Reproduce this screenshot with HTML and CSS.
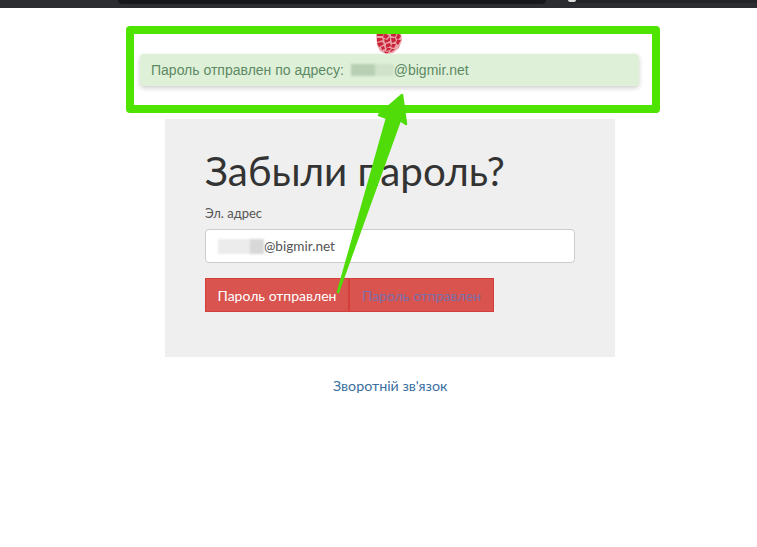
FILE: index.html
```html
<!DOCTYPE html>
<html lang="ru">
<head>
<meta charset="utf-8">
<title>Забыли пароль?</title>
<link rel="stylesheet" href="styles.css">
</head>
<body>
<header class="topbar"><div class="tab"></div><div class="address"><span class="dot"></span></div></header>
<main class="page">
  <div class="logo">
    <svg width="26" height="21" viewBox="0 0 26 21"><path d="M0 0h25l1 7-3 8-6 5-7 1-6-3-3-6z" fill="#e9a0a6"/><g fill="#c9243a"><path d="M1 0l7 0-1 3-6 0zM9 0l4 3-3 3-3-2zM15 0l6 0-2 4-4-1zM22 0l3 3-3 4-2-2zM1 5l5 0 1 2-6 2zM8 6l3 1 3-3 0 4-5 2zM15 5l4 0 1 3-4 2zM21 7l4 0-3 5-2-2zM1 10l5-1 2 2-5 3zM10 11l4-1 1 3-5 2zM16 11l4 0-2 4-3-1zM5 14l3-1 1 3-3 1zM11 15l4 0-1 2-4 1zM16 16l3 0-4 3-1-1zM8 18l3 1 2-1-1 2-3 0z"/></g></svg>
  </div>
  <div class="alert">Пароль отправлен по адресу:&nbsp;<span class="blur blur-alert"></span>@bigmir.net</div>
  <section class="panel">
    <h1 class="title">Забыли пароль?</h1>
    <label class="label">Эл. адрес</label>
    <div class="input"><span class="blur blur-input"></span>@bigmir.net</div>
    <div class="buttons">
      <button class="btn">Пароль отправлен</button><button class="btn btn-ghost">Пароль отправлен</button>
    </div>
  </section>
  <a class="feedback">Зворотній зв'язок</a>
</main>
<div class="highlight"></div>
<svg class="arrow" width="757" height="547" viewBox="0 0 757 547"><path d="M402 95L406 124L400 120L338 292L387 118L379 115Z" fill="#4fdc08" stroke="#4fdc08" stroke-width="2.5" stroke-linejoin="round"/></svg>
</body>
</html>
```
FILE: styles.css
```css
html, body { margin: 0; padding: 0; height: 547px; overflow: hidden; background: #fff; }
body { font-family: "Liberation Sans", Arial, sans-serif; color: #333; position: relative; }

.topbar { height: 8px; background: #2b2d30; display: flex; align-items: flex-start; }
.tab { width: 429px; height: 4px; margin-left: 118px; background: #17181a; border-radius: 0 0 10px 10px; }
.address { width: 190px; height: 3px; margin-left: 22px; background: #232427; display: flex; }
.dot { width: 8px; height: 2px; background: #ddd; border-radius: 0 0 4px 4px; }

.page { display: flex; flex-direction: column; align-items: flex-start; }
.logo { margin: 25px 0 0 376px; height: 21px; line-height: 0; filter: blur(.4px); }
.alert {
  box-sizing: border-box; width: 499px; height: 32px; margin-left: 140px;
  padding: 0 11px; display: flex; align-items: center; white-space: pre;
  background: #dff0d8; border-radius: 4px; box-shadow: 0 2px 5px rgba(0,0,0,.2);
  color: #5c8a64; font-size: 14px;
}
.blur { display: inline-block; filter: blur(1px); }
.blur-alert { width: 43px; height: 12px; margin-left: 3px; background: linear-gradient(90deg,#b8cfb4 0 55%,#d0e2ca 55% 100%); }
.blur-input { width: 46px; height: 15px; margin-left: 12px; background: linear-gradient(90deg,#ececec 0 70%,#d8d8d8 70% 100%); }

.panel { box-sizing: border-box; width: 450px; height: 238px; margin: 33px 0 0 165px; padding: 30px 40px 0; background: #efefef; }
.title { margin: 0; font-family: Lato, "Open Sans", sans-serif; font-weight: 400; font-size: 40.3px; line-height: 44px; color: #333; }
.label { display: block; margin-top: 12px; font-family: Lato, "Open Sans", sans-serif; font-size: 13px; line-height: 16px; color: #555; }
.input {
  box-sizing: border-box; width: 370px; height: 34px; margin-top: 8px;
  display: flex; align-items: center; background: #fff;
  border: 1px solid #ccc; border-radius: 4px;
  font-family: Lato, "Open Sans", sans-serif; font-size: 13.6px; color: #555;
}
.buttons { display: flex; margin-top: 15px; }
.btn {
  box-sizing: border-box; width: 144px; height: 34px; padding: 0;
  background: #d9534f; border: 1px solid #d43f3a; color: #fff;
  font-family: Lato, "Open Sans", sans-serif; font-size: 14px;
}
.btn-ghost { width: 145px; color: #7a6fa8; }

.feedback { margin: 21px 0 0 333px; width: 114px; white-space: nowrap; font-family: Lato, "Open Sans", sans-serif; font-size: 14.25px; line-height: 16px; color: #3a6f9f; }

.highlight { position: absolute; left: 126px; top: 26px; width: 534px; height: 87px; box-sizing: border-box; border: 8px solid #4fe300; border-radius: 4px; }
.arrow { position: absolute; left: 0; top: 0; pointer-events: none; }
```
